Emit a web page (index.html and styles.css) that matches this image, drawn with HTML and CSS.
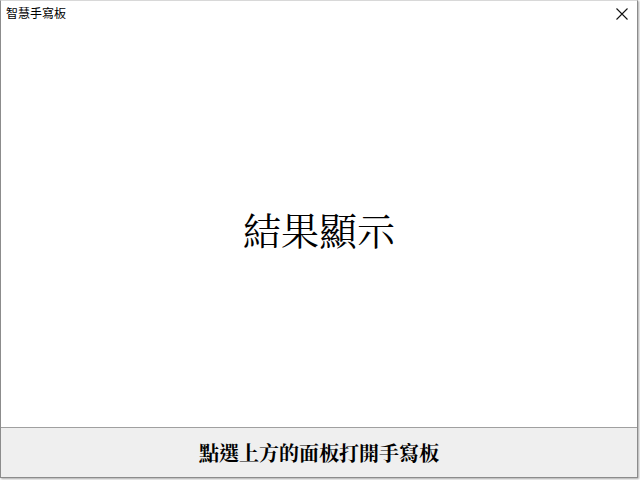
FILE: index.html
```html
<!DOCTYPE html>
<html lang="zh-Hant">
<head>
<meta charset="utf-8">
<title>智慧手寫板</title>
<link rel="stylesheet" href="styles.css">
</head>
<body>
<div class="window">
  <div class="titlebar">
    <span class="title">智慧手寫板</span>
    <span class="close">
      <svg width="12" height="12" viewBox="0 0 12 12"><path d="M0.5 0.5 L11.5 11.5 M11.5 0.5 L0.5 11.5" stroke="#111" stroke-width="1.1" fill="none"/></svg>
    </span>
  </div>
  <div class="content">
    <div class="result">結果顯示</div>
  </div>
  <div class="footer">點選上方的面板打開手寫板</div>
</div>
</body>
</html>
```

FILE: styles.css
```css
html, body {
  margin: 0;
  padding: 0;
  background: #ffffff;
  width: 640px;
  height: 480px;
  overflow: hidden;
}
.window {
  box-sizing: border-box;
  width: 638px;
  height: 478px;
  border-left: 1px solid #8c8c8c;
  border-right: 1px solid #8c8c8c;
  border-bottom: 1px solid #8c8c8c;
  border-top: 1px solid #d8d8d8;
  box-shadow: 1px 1px 2px rgba(0,0,0,0.35);
  display: flex;
  flex-direction: column;
  background: #fff;
}
.titlebar {
  height: 25px;
  display: flex;
  align-items: center;
  justify-content: space-between;
  padding-left: 5px;
  padding-right: 9px;
}
.title {
  font-family: "Noto Sans CJK TC", "Noto Sans", sans-serif;
  font-size: 12px;
  color: #000;
  line-height: 1;
  margin-top: -1px;
}
.close {
  display: flex;
  width: 12px;
  height: 12px;
  margin-top: 1px;
}
.content {
  flex: 1;
  display: flex;
  align-items: center;
  justify-content: center;
}
.result {
  font-family: "Noto Serif CJK TC", "Noto Sans CJK TC", serif;
  font-size: 38px;
  color: #000;
  line-height: 1;
  margin-top: 4px;
}
.footer {
  height: 49px;
  border-top: 1px solid #a0a0a0;
  background: #efefef;
  display: flex;
  align-items: center;
  justify-content: center;
  font-family: "Noto Serif CJK TC", "Noto Sans CJK TC", serif;
  font-weight: bold;
  font-size: 20px;
  color: #000;
}
```
